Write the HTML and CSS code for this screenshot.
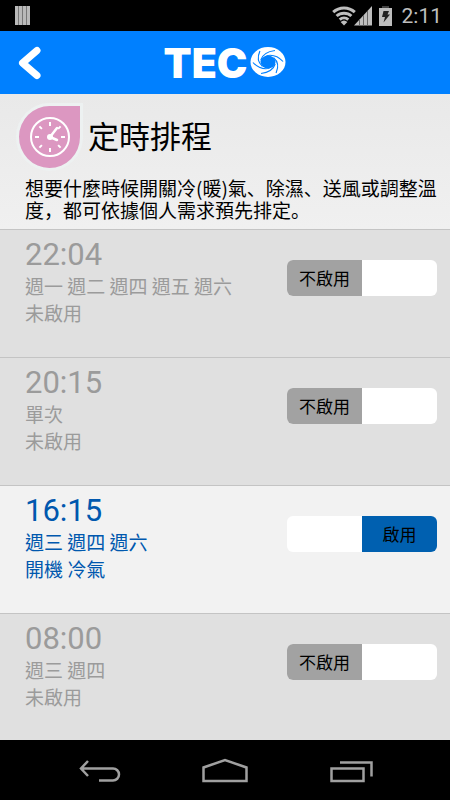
FILE: index.html
```html
<!DOCTYPE html>
<html lang="zh-Hant">
<head>
  <meta charset="UTF-8" />
  <meta name="viewport" content="width=device-width, initial-scale=1.0"/>
  <title>TECO 定時排程</title>
  <link rel="stylesheet" href="styles.css">
</head>
<body>

  <div class="status-bar">
    <svg class="status-app" viewBox="0 0 15 19" width="15" height="19">
      <path fill="#b9b9b9" d="M0 0h3v19H0zM4 0h3v19H4zM8 0h3v19H8zM12 0h3v19h-3z"/>
      <path fill="#777" d="M3 0h1v19H3zM7 0h1v19H7zM11 0h1v19h-1z"/>
    </svg>
    <div class="status-right">
      <svg viewBox="0 0 62 21" width="62" height="21">
        <!-- wifi -->
        <g fill="none" stroke="#bebebe" stroke-width="3">
          <path d="M1.200 7.200a16 16 0 0 1 21.600 0"/>
          <path d="M4.600 11a11 11 0 0 1 14.800 0"/>
          <path d="M7.700 14.700a6.500 6.500 0 0 1 8.600 0"/>
        </g>
        <path fill="#bebebe" d="M8.600 17a5 5 0 0 1 6.800 0L12 20.500z"/>
        <!-- signal -->
        <path fill="#bebebe" d="M22 20.500L40 1v19.500z"/>
        <path stroke="#666" d="M27.500 14v7M31.500 10v11M35.500 6v15"/>
        <!-- battery -->
        <path fill="#444" d="M50 1h7v2h-7z"/>
        <path fill="#bebebe" d="M47 3h13v18H47z"/>
        <path fill="#222" d="M51.500 6h5.500l-1.500 3.500h2.500l-6.500 8 1.500-5.500h-3z"/>
      </svg>
      <span class="clock">2:11</span>
    </div>
  </div>

  <header>
    <a class="back" href="#" aria-label="返回">
      <svg viewBox="0 0 24 34" width="24" height="34">
        <path d="M19 4.500L4.500 17 19 29.500" fill="none" stroke="#fff" stroke-width="7" stroke-linecap="round" stroke-linejoin="round"/>
      </svg>
    </a>
    <div class="logo" role="img" aria-label="TECO">
      <span>TEC</span>
      <svg viewBox="0 0 36 30" width="36" height="30">
        <ellipse cx="18" cy="15" rx="17.500" ry="15" fill="#fff"/>
        <g transform="translate(18 15) scale(1.160 1)">
          <circle r="6.500" fill="#0080ff"/>
          <g fill="none" stroke="#0080ff" stroke-width="1">
            <path d="M-6.200-2Q-4-10 6-11.500"/>
            <path d="M-6.200-2Q-4-10 6-11.500" transform="rotate(60)"/>
            <path d="M-6.200-2Q-4-10 6-11.500" transform="rotate(120)"/>
            <path d="M-6.200-2Q-4-10 6-11.500" transform="rotate(180)"/>
            <path d="M-6.200-2Q-4-10 6-11.500" transform="rotate(240)"/>
            <path d="M-6.200-2Q-4-10 6-11.500" transform="rotate(300)"/>
          </g>
        </g>
      </svg>
    </div>
  </header>

  <section class="intro">
    <div class="intro-title">
      <svg viewBox="0 0 70 70" width="70" height="70">
        <path fill="none" stroke="#edf1f1" stroke-width="6" d="M35 5h30v31A30.500 31 0 1 1 35 5z"/>
        <path fill="#dc97c1" d="M35 5h30v31A30.500 31 0 1 1 35 5z"/>
        <g fill="none" stroke="#fff" stroke-width="2">
          <circle cx="35" cy="36" r="19"/>
          <path d="M35 21v4M35 47v4M20 36h4M46 36h4M24.400 25.400l2.500 2.500M43.100 44.100l2.500 2.500M45.600 25.400l-2.500 2.500M26.900 44.100l-2.500 2.500"/>
          <path d="M35 36l7-9M35 36l7 3" stroke-width="2.500" stroke-linecap="round"/>
        </g>
        <circle cx="35" cy="36" r="3" fill="#fff"/>
      </svg>
      <h1>定時排程</h1>
    </div>
    <p lang="zh">想要什麼時候開關冷(暖)氣、除濕、送風或調整溫度，都可依據個人需求預先排定。</p>
  </section>

  <ul class="schedule">
    <li class="item">
      <div class="info">
        <div class="time">22:04</div>
        <div class="days">週一 週二 週四 週五 週六</div>
        <div class="days">未啟用</div>
      </div>
      <label class="switch">
        <input type="checkbox">
        <span class="off">不啟用</span>
        <span class="on">啟用</span>
      </label>
    </li>
    <li class="item">
      <div class="info">
        <div class="time">20:15</div>
        <div class="days">單次</div>
        <div class="days">未啟用</div>
      </div>
      <label class="switch">
        <input type="checkbox">
        <span class="off">不啟用</span>
        <span class="on">啟用</span>
      </label>
    </li>
    <li class="item active">
      <div class="info">
        <div class="time">16:15</div>
        <div class="days">週三 週四 週六</div>
        <div class="days">開機 冷氣</div>
      </div>
      <label class="switch">
        <input type="checkbox" checked>
        <span class="off">不啟用</span>
        <span class="on">啟用</span>
      </label>
    </li>
    <li class="item">
      <div class="info">
        <div class="time">08:00</div>
        <div class="days">週三 週四</div>
        <div class="days">未啟用</div>
      </div>
      <label class="switch">
        <input type="checkbox">
        <span class="off">不啟用</span>
        <span class="on">啟用</span>
      </label>
    </li>
  </ul>

  <nav class="nav-bar">
    <button type="button" aria-label="Back">
      <svg viewBox="0 0 44 30" width="44" height="30">
        <path d="M11 6L4 13.500 11 21M4 13.500h32a6 6 0 0 1 0 12H22" fill="none" stroke="#a0a0a0" stroke-width="2.500"/>
      </svg>
    </button>
    <button type="button" aria-label="Home">
      <svg viewBox="0 0 48 30" width="48" height="30">
        <path d="M2.500 26V12.500L24 5l21.500 7.500V26z" fill="none" stroke="#a0a0a0" stroke-width="2.500"/>
      </svg>
    </button>
    <button type="button" aria-label="Recent apps">
      <svg viewBox="0 0 44 30" width="44" height="30">
        <path d="M2.500 13.500h32V26h-32zM11 7.500h31.500v14" fill="none" stroke="#a0a0a0" stroke-width="2.500"/>
      </svg>
    </button>
  </nav>

</body>
</html>
```
FILE: styles.css
```css
* {
  box-sizing: border-box;
}
body {
  font-family: "Noto Sans CJK TC", sans-serif;
  background: #e0e0e0;
  margin: 0;
  height: 100vh;
  display: flex;
  flex-direction: column;
}

/* Status bar */
.status-bar {
  background: #000;
  height: 31px;
  flex-shrink: 0;
  padding: 0 8px 0 15px;
  display: flex;
  justify-content: space-between;
  align-items: center;
}
.status-right {
  display: flex;
  align-items: center;
  gap: 8px;
}
.clock {
  font-family: Roboto, sans-serif;
  font-size: 21px;
  line-height: 31px;
  padding-top: 2px;
  color: #bebebe;
}

/* Header */
header {
  background: #0080ff;
  height: 63px;
  flex-shrink: 0;
  padding: 0 18px;
  display: grid;
  grid-template-columns: 1fr auto 1fr;
  align-items: center;
}
.back {
  display: flex;
}
.logo {
  display: flex;
  align-items: center;
  gap: 3px;
  font-family: Inter, sans-serif;
  font-size: 41px;
  line-height: 40px;
  font-weight: 900;
  color: #fff;
}
.logo svg {
  margin-bottom: 2px;
}

/* Intro */
.intro {
  background: linear-gradient(#e9e9e9, #f0f0f0);
  flex-shrink: 0;
  padding: 7px 12px 8px 25px;
}
.intro-title {
  display: flex;
  align-items: center;
  gap: 3px;
  height: 70px;
  margin-left: -10px;
}
h1 {
  margin: 0 0 2px;
  font-size: 31px;
  line-height: 40px;
  font-weight: 400;
  color: #000;
}
.intro p {
  margin: 6px 0 0;
  font-family: "Noto Sans CJK SC", sans-serif;
  font-size: 19px;
  line-height: 22px;
  color: #000;
}

/* Schedule list */
.schedule {
  list-style: none;
  margin: 0;
  padding: 0;
  flex: 1;
  min-height: 0;
  overflow-y: auto;
  scrollbar-width: none;
}
.item {
  display: flex;
  justify-content: space-between;
  align-items: flex-start;
  height: 128px;
  padding: 7px 13px 0 25px;
  border-top: 1px solid #c4c4c4;
  color: #9b9b9b;
}
.item.active {
  background: #f2f2f2;
  color: #0058ae;
}
.time {
  font-family: Roboto, sans-serif;
  font-size: 31px;
  line-height: 35px;
}
.days {
  font-size: 19px;
  line-height: 27px;
}
.switch {
  position: relative;
  display: flex;
  width: 150px;
  height: 36px;
  margin-top: 23px;
  border-radius: 6px;
  overflow: hidden;
  background: #fff;
  font-size: 17px;
  line-height: 36px;
  text-align: center;
  color: #000;
}
.switch input {
  position: absolute;
  inset: 0;
  width: 100%;
  height: 100%;
  margin: 0;
  opacity: 0;
}
.switch span {
  flex: 1;
}
.switch .off {
  background: #a2a2a2;
}
.switch .on,
.switch input:checked ~ .off {
  background: #fff;
  visibility: hidden;
}
.switch input:checked ~ .on {
  background: #0060b0;
  visibility: visible;
}

/* Navigation bar */
.nav-bar {
  background: #000;
  height: 60px;
  flex-shrink: 0;
  padding: 0 36px;
  display: flex;
  align-items: center;
}
.nav-bar button {
  flex: 1;
  display: flex;
  justify-content: center;
  padding: 0;
  border: 0;
  background: none;
}
```
